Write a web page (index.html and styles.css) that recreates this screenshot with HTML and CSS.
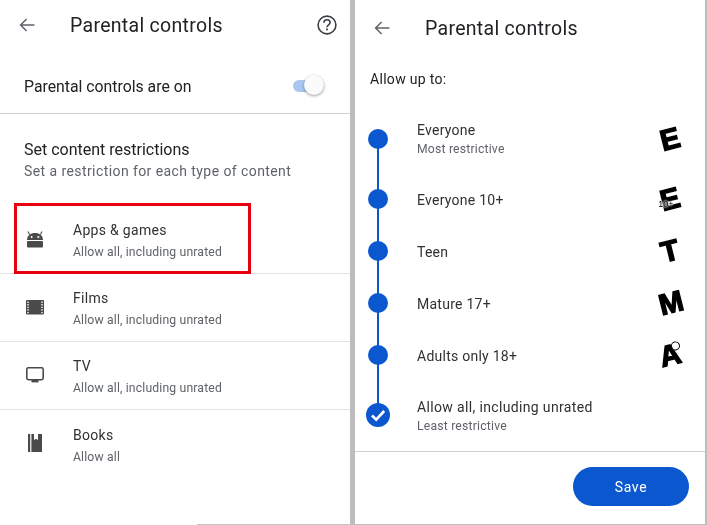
FILE: index.html
```html
<!DOCTYPE html>
<html lang="en">
<head>
    <meta charset="UTF-8">
    <title>Parental controls</title>
    <link rel="stylesheet" href="styles.css">
</head>
<body>
    <div class="screens">
        <section class="panel panel-left">
            <header class="top-bar">
                <svg class="back-icon" viewBox="0 0 18 16"><path d="M17.5 8H2M8.5 1.2 1.7 8l6.8 6.8" fill="none" stroke="#5f6368" stroke-width="1.7"/></svg>
                <h1 class="page-title">Parental controls</h1>
                <svg class="help-icon" viewBox="0 0 20 20">
                    <circle cx="10" cy="10" r="8.9" fill="none" stroke="#3c4043" stroke-width="1.6"/>
                    <path d="M6.9 7.8c0-1.8 1.4-3 3.1-3s3.1 1.2 3.1 2.8c0 2.2-3.1 2.2-3.1 4.6" fill="none" stroke="#3c4043" stroke-width="1.6"/>
                    <rect x="9.1" y="13.5" width="1.8" height="1.8" fill="#3c4043"/>
                </svg>
            </header>
            <div class="toggle-row">
                <span class="toggle-label">Parental controls are on</span>
                <span class="toggle"><span class="toggle-knob"></span></span>
            </div>
            <div class="restrictions">
                <h2 class="section-title">Set content restrictions</h2>
                <p class="section-sub">Set a restriction for each type of content</p>
            </div>
            <ul class="content-list">
                <li class="content-item">
                    <svg class="content-icon" viewBox="0 0 18 18">
                        <path d="M1 10C1 5.6 4.6 3 9 3s8 2.6 8 7z" fill="#4a4a4a"/>
                        <path d="M3.6 4.4 2 1.4M14.4 4.4 16 1.4" stroke="#4a4a4a" stroke-width="1.1"/>
                        <circle cx="5.6" cy="7" r="1" fill="#fff"/>
                        <circle cx="12.4" cy="7" r="1" fill="#fff"/>
                        <rect x="1" y="11" width="16" height="6.5" rx="1" fill="#4a4a4a"/>
                    </svg>
                    <div class="item-text">
                        <div class="item-title">Apps &amp; games</div>
                        <div class="item-sub">Allow all, including unrated</div>
                    </div>
                </li>
                <li class="content-item">
                    <svg class="content-icon" viewBox="0 0 18 18">
                        <rect x="0" y="2" width="18" height="14.5" rx="1" fill="#4a4a4a"/>
                        <path d="M2 3.5v12M16 3.5v12" stroke="#e4e4e4" stroke-width="1.6" stroke-dasharray="1.4 1.2"/>
                    </svg>
                    <div class="item-text">
                        <div class="item-title">Films</div>
                        <div class="item-sub">Allow all, including unrated</div>
                    </div>
                </li>
                <li class="content-item">
                    <svg class="content-icon" viewBox="0 0 18 18">
                        <rect x="0.8" y="1.8" width="16.4" height="11.9" rx="1.6" fill="none" stroke="#4a4a4a" stroke-width="1.6"/>
                        <rect x="5.5" y="14" width="7" height="2.4" fill="#4a4a4a"/>
                    </svg>
                    <div class="item-text">
                        <div class="item-title">TV</div>
                        <div class="item-sub">Allow all, including unrated</div>
                    </div>
                </li>
                <li class="content-item">
                    <svg class="content-icon" viewBox="0 0 18 18">
                        <rect x="2" y="0" width="2.2" height="18" fill="#4a4a4a"/>
                        <path d="M5.4 0H8v6l2-1.3L12 6V0h4v18H5.4z" fill="#4a4a4a"/>
                    </svg>
                    <div class="item-text">
                        <div class="item-title">Books</div>
                        <div class="item-sub">Allow all</div>
                    </div>
                </li>
            </ul>
            <div class="highlight"></div>
            <div class="bottom-edge"></div>
        </section>

        <section class="panel panel-right">
            <header class="top-bar top-bar-right">
                <svg class="back-icon" viewBox="0 0 18 16"><path d="M17.5 8H2M8.5 1.2 1.7 8l6.8 6.8" fill="none" stroke="#5f6368" stroke-width="1.7"/></svg>
                <h1 class="page-title">Parental controls</h1>
            </header>
            <p class="allow-label">Allow up to:</p>
            <div class="steps">
                <div class="step-line"></div>
                <div class="step step-tall step-first">
                    <span class="step-dot"></span>
                    <div class="step-text">
                        <div class="step-title">Everyone</div>
                        <div class="step-sub">Most restrictive</div>
                    </div>
                    <span class="rating">E</span>
                </div>
                <div class="step">
                    <span class="step-dot"></span>
                    <div class="step-text"><div class="step-title">Everyone 10+</div></div>
                    <span class="rating">E<span class="rating-ten">10+</span></span>
                </div>
                <div class="step">
                    <span class="step-dot"></span>
                    <div class="step-text"><div class="step-title">Teen</div></div>
                    <span class="rating">T</span>
                </div>
                <div class="step">
                    <span class="step-dot"></span>
                    <div class="step-text"><div class="step-title">Mature 17+</div></div>
                    <span class="rating">M</span>
                </div>
                <div class="step">
                    <span class="step-dot"></span>
                    <div class="step-text"><div class="step-title">Adults only 18+</div></div>
                    <span class="rating">A<span class="rating-ao"></span></span>
                </div>
                <div class="step step-tall">
                    <span class="step-dot step-check">
                        <svg viewBox="0 0 24 24"><path d="M6 12.5l4.2 4.2L18.2 8" fill="none" stroke="#fff" stroke-width="2.6"/></svg>
                    </span>
                    <div class="step-text">
                        <div class="step-title step-title-large">Allow all, including unrated</div>
                        <div class="step-sub">Least restrictive</div>
                    </div>
                </div>
            </div>
            <footer class="save-bar">
                <button class="save-button">Save</button>
            </footer>
        </section>
    </div>
</body>
</html>
```

FILE: styles.css
```css
* {
    box-sizing: border-box;
}

body {
    margin: 0;
    background-color: #fff;
    font-family: 'Roboto', sans-serif;
    color: #202124;
}

.screens {
    display: flex;
    width: 707px;
    height: 525px;
    overflow: hidden;
    background-color: #bdbdbd;
}

.panel {
    position: relative;
    flex: none;
    background-color: #fff;
    filter: blur(0.3px);
}

.panel-left {
    width: 350px;
}

.panel-right {
    width: 350px;
    margin-left: 5px;
    height: 524px;
}

/* top bar */
.top-bar {
    display: flex;
    align-items: center;
    height: 50px;
    padding: 0 13px 0 19px;
}

.top-bar-right {
    height: 56px;
}

.back-icon {
    width: 16px;
    height: 14px;
    flex: none;
}

.page-title {
    margin: 0 0 0 35px;
    flex: 1;
    font-size: 19.5px;
    font-weight: 400;
    letter-spacing: 0.3px;
}

.help-icon {
    width: 20px;
    height: 20px;
    flex: none;
}

/* toggle */
.toggle-row {
    display: flex;
    align-items: center;
    justify-content: space-between;
    height: 64px;
    padding: 9px 26px 0 24px;
    border-bottom: 1px solid #cfcfcf;
}

.toggle-label {
    font-size: 15.8px;
}

.toggle {
    position: relative;
    width: 31px;
    height: 12px;
    border-radius: 6px;
    background-color: #a8c7f0;
}

.toggle-knob {
    position: absolute;
    right: 0;
    top: -5px;
    width: 20px;
    height: 20px;
    border-radius: 50%;
    background-color: #fbfbfb;
    box-shadow: 0 1px 3px rgba(0, 0, 0, 0.4);
}

/* restrictions */
.restrictions {
    padding: 26px 24px 0;
    height: 92px;
}

.section-title {
    margin: 0;
    font-size: 16px;
    font-weight: 400;
    line-height: 19px;
}

.section-sub {
    margin: 3px 0 0;
    font-size: 14px;
    line-height: 18px;
    color: #5f6368;
    letter-spacing: 0.42px;
}

.content-list {
    list-style: none;
    margin: 0;
    padding: 0;
}

.content-item {
    display: flex;
    align-items: center;
    height: 68px;
    padding-left: 26px;
    border-bottom: 1px solid #e3e3e3;
}

.content-item:last-child {
    border-bottom: none;
}

.content-icon {
    width: 18px;
    height: 18px;
    flex: none;
    margin: -2px 29px 0 0;
}

.item-text {
    padding-top: 3px;
}

.item-title {
    font-size: 14px;
    line-height: 18px;
    letter-spacing: 0.3px;
    color: #303134;
}

.item-sub {
    margin-top: 4px;
    font-size: 12.2px;
    line-height: 18px;
    letter-spacing: 0.16px;
    color: #5f6368;
}

.highlight {
    position: absolute;
    left: 14px;
    top: 203px;
    width: 237px;
    height: 71px;
    border: 3px solid #e8000f;
}

.bottom-edge {
    position: absolute;
    left: 197px;
    right: 0;
    bottom: 0;
    height: 1px;
    background-color: #c4c4c4;
}

/* right panel */
.allow-label {
    margin: 0;
    padding-left: 15px;
    height: 49px;
    font-size: 14px;
    line-height: 46px;
    letter-spacing: 0.3px;
}

.steps {
    position: relative;
    height: 347px;
    border-bottom: 1px solid #cfcfcf;
}

.step-line {
    position: absolute;
    left: 22px;
    top: 34px;
    width: 2px;
    height: 276px;
    background-color: #0b57d0;
}

.step {
    position: relative;
    display: flex;
    align-items: center;
    height: 52px;
    padding-left: 13px;
    padding-right: 24px;
}

.step-tall {
    height: 68px;
}

.step-dot {
    flex: none;
    width: 20px;
    height: 20px;
    border-radius: 50%;
    background-color: #0b57d0;
    margin-right: 29px;
}

.step-check {
    width: 24px;
    height: 24px;
    margin-left: -2px;
    margin-right: 27px;
}

.step-check svg {
    display: block;
}

.step-text {
    flex: 1;
    padding-top: 3px;
}

.step-first .step-text {
    padding-top: 1px;
}

.step-title {
    font-size: 14px;
    line-height: 19px;
    letter-spacing: 0.25px;
    color: #303134;
}

.step-title-large {
    letter-spacing: 0.35px;
}

.step-sub {
    font-size: 12.2px;
    line-height: 18px;
    letter-spacing: 0.2px;
    color: #5f6368;
}

.rating {
    position: relative;
    width: 22px;
    text-align: center;
    font-family: 'Liberation Sans', sans-serif;
    font-size: 29px;
    font-weight: 700;
    line-height: 26px;
    color: #000;
    transform: rotate(-14deg);
    -webkit-text-stroke: 1.4px #000;
}

.rating-ten {
    position: absolute;
    left: -2px;
    top: 13px;
    font-size: 9px;
    line-height: 9px;
    -webkit-text-stroke: 0;
    font-weight: 400;
    text-shadow: 0 0 2px #fff, 0 0 2px #fff, 0 0 2px #fff;
    transform: rotate(14deg);
}

.rating-ao {
    position: absolute;
    right: -1px;
    top: 1px;
    width: 9px;
    height: 9px;
    border-radius: 50%;
    background-color: #fff;
    border: 1.5px solid #000;
}

.save-bar {
    display: flex;
    justify-content: flex-end;
    padding: 15px 16px 0 0;
}

.save-button {
    width: 116px;
    height: 39px;
    border: none;
    border-radius: 20px;
    background-color: #0b57d0;
    color: #fff;
    font-family: 'Roboto', sans-serif;
    font-size: 14px;
    font-weight: 400;
    letter-spacing: 0.6px;
}
```
